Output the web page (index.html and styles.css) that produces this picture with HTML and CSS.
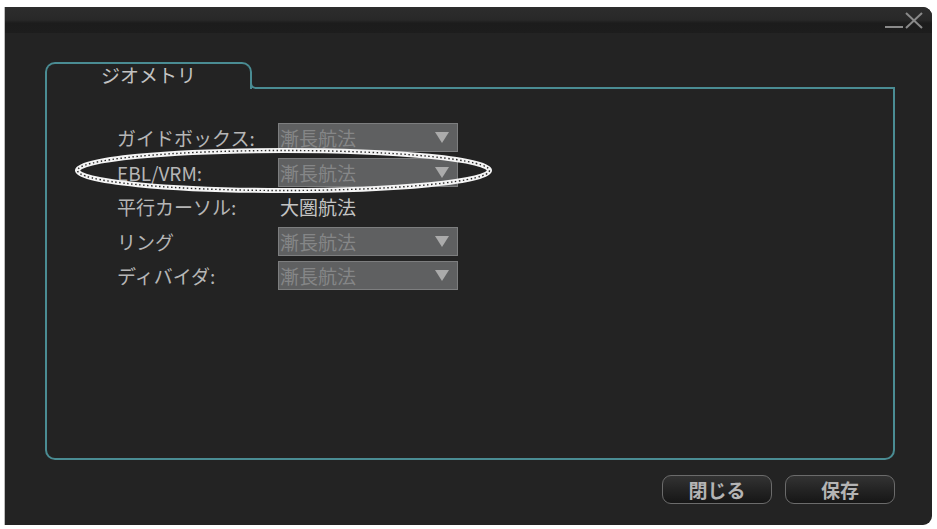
FILE: index.html
```html
<!DOCTYPE html>
<html lang="ja">
<head>
<meta charset="utf-8">
<title>ジオメトリ</title>
<link rel="stylesheet" href="styles.css">
</head>
<body>
<div class="window">
  <div class="titlebar">
    <svg class="win-ctrl" width="42" height="22" viewBox="0 0 42 22">
      <line x1="2" y1="17" x2="20" y2="17"/>
      <line x1="23" y1="3" x2="39" y2="18"/>
      <line x1="39" y1="3" x2="23" y2="18"/>
    </svg>
  </div>
  <div class="content">
    <div class="panel">
      <div class="tabs">
        <div class="tab">ジオメトリ</div>
        <div class="tab-fill"></div>
      </div>
      <div class="panel-body">
        <div class="form">
          <div class="label">ガイドボックス:</div>
          <div class="select"><span>漸長航法</span><i class="arrow"></i></div>
          <div class="label">EBL/VRM:</div>
          <div class="select"><span>漸長航法</span><i class="arrow"></i></div>
          <div class="label">平行カーソル:</div>
          <div class="value">大圏航法</div>
          <div class="label">リング</div>
          <div class="select"><span>漸長航法</span><i class="arrow"></i></div>
          <div class="label">ディバイダ:</div>
          <div class="select"><span>漸長航法</span><i class="arrow"></i></div>
        </div>
      </div>
    </div>
    <div class="buttons">
      <button class="btn">閉じる</button>
      <button class="btn">保存</button>
    </div>
  </div>
  <svg class="highlight" width="430" height="56" viewBox="0 0 430 56">
    <ellipse class="rope" cx="213.5" cy="27.5" rx="206" ry="20"/>
    <ellipse class="dots" cx="213.5" cy="27.5" rx="206" ry="20"/>
  </svg>
</div>
</body>
</html>
```

FILE: styles.css
```css
html, body {
  margin: 0;
  padding: 0;
  background: #ffffff;
}

body {
  font-family: "Noto Sans CJK JP", "Noto Sans", sans-serif;
  padding: 7px 0 0 5px;
  height: 529px;
  box-sizing: border-box;
  overflow: hidden;
}

.window {
  position: relative;
  width: 927px;
  height: 518px;
  background: #232323;
  border-radius: 0 9px 9px 0;
  display: flex;
  flex-direction: column;
  box-shadow: -1px 0 0 #bdbdbd;
}

.titlebar {
  height: 26px;
  flex: none;
  display: flex;
  justify-content: flex-end;
  align-items: flex-start;
  padding: 3px 7px 0 0;
  box-sizing: border-box;
  border-radius: 0 9px 0 0;
  background: linear-gradient(#2d2d2d 0%, #282828 50%, #1c1c1c 62%, #1d1d1d 100%);
}

.win-ctrl line {
  stroke: #8a8a8a;
  stroke-width: 2;
}

.content {
  flex: 1;
  display: flex;
  flex-direction: column;
  padding: 29px 37px 0 40px;
}

.panel {
  height: 398px;
  display: flex;
  flex-direction: column;
}

.tabs {
  display: flex;
  height: 27px;
  flex: none;
}

.tab {
  width: 207px;
  box-sizing: border-box;
  border: 2px solid #4a8c93;
  border-bottom: none;
  border-radius: 10px 10px 0 0;
  color: #c2c2c2;
  font-size: 19px;
  line-height: 22px;
  text-align: center;
  padding-top: 0;
}

.tab-fill {
  flex: 1;
  margin-left: -2px;
  margin-top: 12px;
  border-left: 2px solid #4a8c93;
  border-bottom: 2px solid #4a8c93;
  border-bottom-left-radius: 6px;
}

.panel-body {
  flex: 1;
  border: 2px solid #4a8c93;
  border-top: none;
  border-radius: 0 0 10px 10px;
  padding: 34px 0 0 70px;
}

.form {
  display: grid;
  grid-template-columns: 161px 180px;
  grid-auto-rows: 29px;
  row-gap: 5.5px;
  align-items: center;
}

.label {
  color: #b6b6b6;
  font-size: 19px;
  line-height: 29px;
  white-space: nowrap;
}

.value {
  color: #c4c4c4;
  font-size: 19px;
  line-height: 29px;
  padding-left: 2px;
}

.select {
  height: 29px;
  box-sizing: border-box;
  border: 1px solid #7d7e7f;
  background: #5f6061;
  display: flex;
  align-items: center;
  justify-content: space-between;
  padding: 0 8px 0 1px;
  color: #858687;
  font-size: 19px;
  line-height: 27px;
}

.arrow {
  width: 0;
  height: 0;
  border-left: 7.5px solid transparent;
  border-right: 7.5px solid transparent;
  border-top: 11px solid #ababab;
}

.buttons {
  display: flex;
  justify-content: flex-end;
  gap: 13px;
  margin-top: 15px;
}

.btn {
  width: 110px;
  height: 29px;
  box-sizing: border-box;
  border: 1.5px solid #6b6b6b;
  border-radius: 9px;
  background: linear-gradient(#333333 0%, #242424 50%, #161616 100%);
  color: #b4b4b4;
  font-family: "Noto Sans CJK JP", "Noto Sans", sans-serif;
  font-weight: bold;
  font-size: 19px;
  line-height: 1;
  padding: 0;
}

.highlight {
  position: absolute;
  left: 65px;
  top: 136px;
}

.highlight ellipse {
  fill: none;
}

.rope {
  stroke: #f4f4f4;
  stroke-width: 5;
}

.dots {
  stroke: #2a2a2a;
  stroke-width: 1.4;
  stroke-dasharray: 1.5 2.5;
}
```
